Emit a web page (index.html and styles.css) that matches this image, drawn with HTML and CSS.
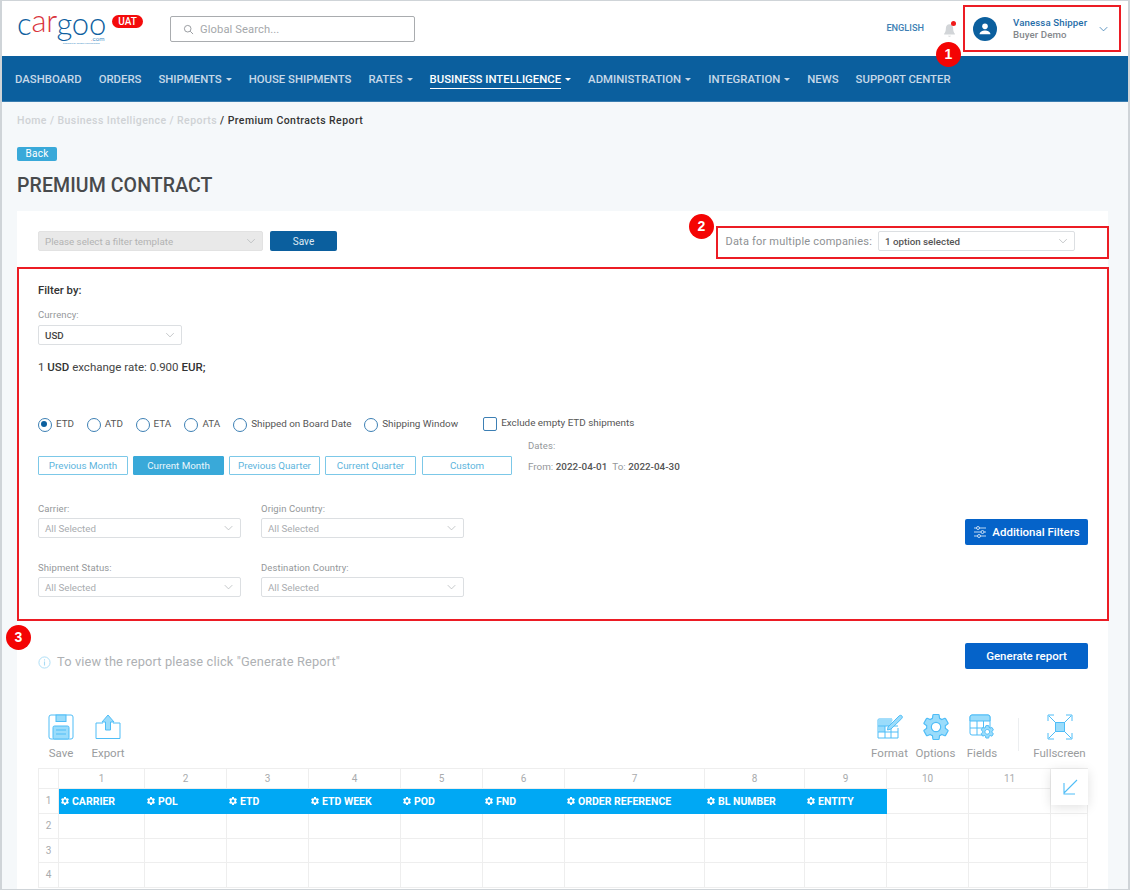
FILE: index.html
```html
<!DOCTYPE html>
<html lang="en">
<head>
<meta charset="utf-8">
<title>Premium Contract</title>
<link rel="stylesheet" href="styles.css">
</head>
<body>
<svg class="defs" width="0" height="0" aria-hidden="true">
  <symbol id="gear" viewBox="0 0 24 24"><path d="M19.14 12.94c.04-.3.06-.61.06-.94 0-.32-.02-.64-.07-.94l2.03-1.58c.18-.14.23-.41.12-.61l-1.92-3.32c-.12-.22-.37-.29-.59-.22l-2.39.96c-.5-.38-1.03-.7-1.62-.94l-.36-2.54c-.04-.24-.24-.41-.48-.41h-3.84c-.24 0-.43.17-.47.41l-.36 2.54c-.59.24-1.13.57-1.62.94l-2.39-.96c-.22-.08-.47 0-.59.22L2.74 8.87c-.12.21-.08.47.12.61l2.03 1.58c-.05.3-.09.63-.09.94s.02.64.07.94l-2.03 1.58c-.18.14-.23.41-.12.61l1.92 3.32c.12.22.37.29.59.22l2.39-.96c.5.38 1.03.7 1.62.94l.36 2.54c.05.24.24.41.48.41h3.84c.24 0 .44-.17.47-.41l.36-2.54c.59-.24 1.13-.56 1.62-.94l2.39.96c.22.08.47 0 .59-.22l1.92-3.32c.12-.22.07-.47-.12-.61l-2.01-1.58zM12 15.6c-1.98 0-3.6-1.62-3.6-3.6s1.62-3.6 3.6-3.6 3.6 1.62 3.6 3.6-1.62 3.6-3.6 3.6z"/></symbol>
  <symbol id="chev" viewBox="0 0 12 8"><path d="M1 1.5l5 5 5-5" fill="none" stroke="currentColor" stroke-width="1.1"/></symbol>
</svg>
<div class="frame">
  <header class="topbar">
    <div class="logo">
      <span class="logo-word"><span class="logo-blue">c</span><span class="logo-red logo-up">ar</span><span class="logo-blue">goo</span></span>
      <span class="logo-com"><span class="logo-red">.</span>com</span>
      <span class="logo-tag">powered by Cargoo Technologies</span>
    </div>
    <span class="uat">UAT</span>
    <div class="search">
      <svg class="search-icon" viewBox="0 0 14 14"><circle cx="6" cy="6" r="4.2" fill="none" stroke="#8b8f93" stroke-width="1.1"/><path d="M9.2 9.2l3.6 3.6" stroke="#8b8f93" stroke-width="1.1"/></svg>
      <span>Global Search...</span>
    </div>
    <div class="top-right">
      <span class="lang">ENGLISH</span>
      <span class="bell">
        <svg viewBox="0 0 14 16" width="13" height="15"><path d="M7 1.2c-2.6 0-3.9 2-3.9 4.3 0 3-.7 4.6-1.9 5.9v1h11.6v-1c-1.2-1.3-1.9-2.9-1.9-5.9C10.9 3.2 9.6 1.2 7 1.2z" fill="#d2d5d8"/><path d="M5.4 13.6a1.7 1.7 0 0 0 3.2 0z" fill="#d2d5d8"/></svg>
        <i class="bell-dot"></i>
      </span>
      <div class="user">
        <span class="avatar">
          <svg viewBox="0 0 24 24" width="16" height="16"><circle cx="12" cy="8" r="4.2" fill="#fff"/><path d="M3.8 20c0-4 4.4-5.8 8.2-5.8s8.2 1.800 8.200 5.800z" fill="#fff"/></svg>
        </span>
        <span class="user-text"><b>Vanessa Shipper</b><em>Buyer Demo</em></span>
        <svg class="user-chev"><use href="#chev"/></svg>
      </div>
    </div>
  </header>

  <nav class="nav">
    <a>Dashboard</a><a>Orders</a><a class="caret">Shipments</a><a>House Shipments</a><a class="caret">Rates</a><a class="caret active">Business Intelligence</a><a class="caret">Administration</a><a class="caret">Integration</a><a>News</a><a>Support Center</a>
  </nav>

  <main class="main">
    <div class="crumbs"><span class="crumb-dim">Home / Business Intelligence / Reports</span> / Premium Contracts Report</div>
    <button class="back">Back</button>
    <h1 class="title">PREMIUM CONTRACT</h1>

    <section class="card">
      <div class="tmpl-row">
        <div class="sel sel-disabled sel-tmpl"><span>Please select a filter template</span><svg class="sel-chev"><use href="#chev"/></svg></div>
        <button class="save">Save</button>
        <div class="multi">
          <span class="multi-label">Data for multiple companies:</span>
          <div class="sel sel-multi"><strong>1 option selected</strong><svg class="sel-chev"><use href="#chev"/></svg></div>
        </div>
      </div>

      <div class="filters">
        <div class="filter-by">Filter by:</div>
        <div class="lbl lbl-cur">Currency:</div>
        <div class="sel sel-cur"><span class="sel-dark">USD</span><svg class="sel-chev"><use href="#chev"/></svg></div>
        <div class="rate">1 <b>USD</b> exchange rate: 0.900 <b>EUR;</b></div>

        <div class="date-block">
          <div class="date-left">
            <div class="radios">
              <label class="radio on w-a">ETD</label>
              <label class="radio w-a">ATD</label>
              <label class="radio w-a">ETA</label>
              <label class="radio w-a">ATA</label>
              <label class="radio w-b">Shipped on Board Date</label>
              <label class="radio w-c">Shipping Window</label>
              <label class="check">Exclude empty ETD shipments</label>
            </div>
            <div class="ranges">
              <button class="range r1">Previous Month</button>
              <button class="range r2 on">Current Month</button>
              <button class="range r3">Previous Quarter</button>
              <button class="range r4">Current Quarter</button>
              <button class="range r5">Custom</button>
            </div>
          </div>
          <div class="dates">
            <div class="lbl">Dates:</div>
            <div class="dates-val"><span>From:</span> <b>2022-04-01</b> &nbsp;<span>To:</span> <b>2022-04-30</b></div>
          </div>
        </div>

        <div class="selects">
          <div class="sel-col">
            <div class="field"><div class="lbl">Carrier:</div><div class="sel sel-wide"><span>All Selected</span><svg class="sel-chev"><use href="#chev"/></svg></div></div>
            <div class="field"><div class="lbl">Shipment Status:</div><div class="sel sel-wide"><span>All Selected</span><svg class="sel-chev"><use href="#chev"/></svg></div></div>
          </div>
          <div class="sel-col">
            <div class="field"><div class="lbl">Origin Country:</div><div class="sel sel-wide"><span>All Selected</span><svg class="sel-chev"><use href="#chev"/></svg></div></div>
            <div class="field"><div class="lbl">Destination Country:</div><div class="sel sel-wide"><span>All Selected</span><svg class="sel-chev"><use href="#chev"/></svg></div></div>
          </div>
          <button class="primary add-filters">
            <svg viewBox="0 0 14 14" width="14" height="14"><g fill="none" stroke="#d6e6f7" stroke-width=".9"><path d="M1 3h12M1 7h12M1 11h12"/><circle cx="5" cy="3" r="1.500" fill="#0563c9"/><circle cx="9.500" cy="7" r="1.500" fill="#0563c9"/><circle cx="6" cy="11" r="1.500" fill="#0563c9"/></g></svg>
            Additional Filters
          </button>
        </div>
      </div>

      <div class="gen-row">
        <div class="hint">
          <svg viewBox="0 0 14 14" width="13" height="13"><circle cx="7" cy="7" r="6" fill="none" stroke="#a9dcf5" stroke-width="1"/><path d="M7 6v4.200M7 3.600v1.200" stroke="#a9dcf5" stroke-width="1.200"/></svg>
          To view the report please click "Generate Report"
        </div>
        <button class="primary generate">Generate report</button>
      </div>

      <div class="toolbar">
        <div class="tool tool-save">
          <svg viewBox="0 0 26 26" width="26" height="26"><path d="M2.500 1h20a2 2 0 0 1 2 2v20a2 2 0 0 1-2 2h-20a2 2 0 0 1-2-2V3a2 2 0 0 1 2-2z" transform="translate(.5)" fill="#fff" stroke="#4fbdf7"/><rect x="8" y="1" width="10" height="6.500" fill="#9adcfb" stroke="#4fbdf7"/><rect x="5" y="12" width="16" height="13" rx="1.500" fill="#9adcfb" stroke="#4fbdf7"/><path d="M8 16h10M8 20h10" stroke="#4fbdf7"/></svg>
          <span>Save</span>
        </div>
        <div class="tool tool-export">
          <svg viewBox="0 0 26 26" width="26" height="26"><path d="M8 9H1v15.500h24V9h-7" fill="none" stroke="#4fbdf7"/><path d="M13 1l6 7h-3.500v8h-5V8H7z" fill="#9adcfb" stroke="#4fbdf7"/></svg>
          <span>Export</span>
        </div>
        <div class="tools-right">
          <div class="tool tool-format">
            <svg viewBox="0 0 26 26" width="26" height="26"><path d="M15 5H2a1 1 0 0 0-1 1v18h20V14" fill="#fff" stroke="#4fbdf7"/><path d="M1 5.500h15L13 12H1z" fill="#9adcfb"/><rect x="1" y="12" width="7" height="6" fill="#9adcfb"/><path d="M1 12h20M1 18h20M8 12v12M14 12v12" stroke="#4fbdf7" fill="none"/><path d="M11 13L22 2c1-1 2.500-.8 3 0s.5 1.800-.3 2.600L14 15l-3.500 1z" fill="#9adcfb" stroke="#4fbdf7"/></svg>
            <span>Format</span>
          </div>
          <div class="tool tool-options">
            <svg class="gear-big" viewBox="2.500 2 19 20" width="26" height="26"><use href="#gear" width="24" height="24"/></svg>
            <span>Options</span>
          </div>
          <div class="tool tool-fields">
            <svg viewBox="0 0 26 26" width="26" height="26"><rect x="1" y="1" width="20" height="20" rx="2" fill="#fff" stroke="#4fbdf7"/><path d="M1 3a2 2 0 0 1 2-2h16a2 2 0 0 1 2 2v4H1z" fill="#9adcfb" stroke="#4fbdf7"/><path d="M1 14h20M8 7v14M14.500 7v14" stroke="#4fbdf7" fill="none"/><g transform="translate(10.500 10) scale(.65)"><use href="#gear" width="24" height="24" class="gear-small"/></g></svg>
            <span>Fields</span>
          </div>
          <i class="tool-sep"></i>
          <div class="tool tool-full">
            <svg viewBox="0 0 26 26" width="26" height="26"><rect x="8.500" y="8.500" width="9" height="9" fill="#9adcfb" stroke="#4fbdf7"/><g fill="none" stroke="#4fbdf7"><path d="M1 7V1h6M25 7V1h-6M1 19v6h6M25 19v6h-6M2 2l6 6M24 2l-6 6M2 24l6-6M24 24l-6-6"/></g></svg>
            <span>Fullscreen</span>
          </div>
        </div>
      </div>

      <div class="sheet">
        <div class="c corner"></div><div class="c hd">1</div><div class="c hd">2</div><div class="c hd">3</div><div class="c hd">4</div><div class="c hd">5</div><div class="c hd">6</div><div class="c hd">7</div><div class="c hd">8</div><div class="c hd">9</div><div class="c hd">10</div><div class="c hd">11</div><div class="c hd"></div>
        <div class="c rn">1</div>
        <div class="c f"><svg class="fg"><use href="#gear"/></svg>CARRIER</div><div class="c f"><svg class="fg"><use href="#gear"/></svg>POL</div><div class="c f"><svg class="fg"><use href="#gear"/></svg>ETD</div><div class="c f"><svg class="fg"><use href="#gear"/></svg>ETD WEEK</div><div class="c f"><svg class="fg"><use href="#gear"/></svg>POD</div><div class="c f"><svg class="fg"><use href="#gear"/></svg>FND</div><div class="c f"><svg class="fg"><use href="#gear"/></svg>ORDER REFERENCE</div><div class="c f"><svg class="fg"><use href="#gear"/></svg>BL NUMBER</div><div class="c f"><svg class="fg"><use href="#gear"/></svg>ENTITY</div>
        <div class="c"></div><div class="c"></div><div class="c"></div>
        <div class="c rn">2</div><div class="c"></div><div class="c"></div><div class="c"></div><div class="c"></div><div class="c"></div><div class="c"></div><div class="c"></div><div class="c"></div><div class="c"></div><div class="c"></div><div class="c"></div><div class="c"></div>
        <div class="c rn">3</div><div class="c"></div><div class="c"></div><div class="c"></div><div class="c"></div><div class="c"></div><div class="c"></div><div class="c"></div><div class="c"></div><div class="c"></div><div class="c"></div><div class="c"></div><div class="c"></div>
        <div class="c rn">4</div><div class="c"></div><div class="c"></div><div class="c"></div><div class="c"></div><div class="c"></div><div class="c"></div><div class="c"></div><div class="c"></div><div class="c"></div><div class="c"></div><div class="c"></div><div class="c"></div>
        <div class="float-btn"><svg viewBox="0 0 16 16" width="16" height="16"><path d="M15 1L2 14M2 4v11h11" fill="none" stroke="#4fbdf7" stroke-width="1.100"/></svg></div>
      </div>
    </section>
  </main>

  <div class="mark mark-1"></div>
  <div class="mark mark-2"></div>
  <div class="mark mark-3"></div>
  <span class="num num-1">1</span>
  <span class="num num-2">2</span>
  <span class="num num-3">3</span>
</div>
</body>
</html>
```
FILE: styles.css
```css
* { box-sizing: border-box; }
html, body { margin: 0; padding: 0; }
body { font-family: Roboto, "Liberation Sans", sans-serif; background: #fff; color: #333; }
.defs { position: absolute; }
button { font-family: inherit; cursor: pointer; }

.frame { position: relative; width: 1130px; height: 890px; overflow: hidden; border: 1px solid #cfd4d8; border-left-width: 2px; border-right-width: 2px; background: #f5f8fa; }

/* top bar */
.topbar { display: flex; align-items: center; height: 55px; background: #fff; padding-left: 16px; }
.logo { position: relative; width: 94px; height: 55px; flex: none; }
.logo-word { position: absolute; left: -1px; top: 10px; font-family: Lato, sans-serif; font-weight: 300; font-size: 31px; line-height: 24px; letter-spacing: -.2px; white-space: nowrap; }
.logo-blue { color: #0f5f9f; }
.logo-red { color: #d9343c; }
.logo-up { position: relative; top: -3px; }
.logo-com { position: absolute; left: 73px; top: 34px; font-size: 6px; line-height: 7px; color: #3f8fc7; }
.logo-tag { position: absolute; left: 45px; top: 41px; font-size: 2.500px; line-height: 3px; color: #3f8fc7; white-space: nowrap; }
.uat { align-self: flex-start; margin-top: 14px; flex: none; width: 31px; height: 13px; border-radius: 7px; background: #f40b0b; color: #fff; font-size: 10px; font-weight: 500; line-height: 13px; text-align: center; }
.search { display: flex; align-items: center; margin-left: 27px; margin-top: 1px; width: 245px; height: 26px; border: 1px solid #a9acaf; border-radius: 2px; padding-left: 12px; font-size: 11.200px; color: #a5a8ab; letter-spacing: .1px; }
.search-icon { width: 11px; height: 11px; margin-right: 6px; }
.top-right { display: flex; align-items: center; margin-left: auto; }
.lang { font-size: 9.200px; font-weight: 500; color: #3d7fb4; margin-top: -2px; }
.bell { position: relative; display: block; width: 13px; height: 15px; margin-left: 19px; margin-top: 3px; }
.bell svg { display: block; }
.bell-dot { position: absolute; left: 8px; top: -2px; width: 5px; height: 5px; border-radius: 50%; background: #f01a1a; }
.user { display: flex; align-items: center; width: 157px; height: 46px; margin-left: 7px; padding-left: 10px; margin-right: 8px; }
.avatar { display: flex; align-items: center; justify-content: center; width: 24px; height: 24px; border-radius: 50%; background: #0b5f9e; flex: none; }
.user-text { display: flex; flex-direction: column; margin-left: 16px; font-size: 9.700px; line-height: 12px; white-space: nowrap; letter-spacing: .1px; }
.user-text b { font-weight: 500; color: #1f6da8; }
.user-text em { font-style: normal; font-weight: 500; color: #85888b; }
.user-chev { width: 9px; height: 6px; margin-left: 12px; color: #3d7fb4; flex: none; }

/* navigation */
.nav { display: flex; align-items: center; gap: 17px; height: 46px; background: #0b5f9e; padding-left: 13px; border-bottom: 1px solid #3a7db0; }
.nav a { position: relative; font-size: 11.350px; font-weight: 500; line-height: 16px; text-transform: uppercase; color: #c6d8e8; white-space: nowrap; }
.nav a.caret::after { content: ""; display: inline-block; margin-left: 4px; vertical-align: 2px; border: 3.500px solid transparent; border-top: 3.500px solid currentColor; border-bottom: 0; }
.nav a.active { color: #fff; }
.nav a.active::before { content: ""; position: absolute; left: 0; right: 10px; bottom: -2px; height: 1px; background: #fff; }

/* main */
.main { padding: 12px 20px 0 15px; }
.crumbs { height: 14px; font-size: 10.500px; line-height: 14px; font-weight: 500; color: #333; letter-spacing: .43px; }
.crumb-dim { color: #cfd2d5; }
.back { display: block; margin-top: 19px; width: 40px; height: 14px; padding: 0; border: 0; border-radius: 2px; background: #39a9d9; color: #fff; font-size: 10px; line-height: 14px; letter-spacing: .3px; }
.title { margin: 14px 0 0; height: 22px; font-size: 19.500px; line-height: 22px; font-weight: 500; color: #484a4c; letter-spacing: .1px; }
.card { width: 1091px; height: 700px; margin-top: 14px; background: #fff; padding: 20px 20px 0 21px; }

.sel { display: flex; align-items: center; justify-content: space-between; height: 20px; border: 1px solid #dcdfe2; border-radius: 2px; background: #fff; padding: 0 6px; font-size: 9.750px; color: #b0b3b6; }
.sel-chev { width: 10px; height: 6px; color: #b9bcbf; flex: none; }
.sel-dark { color: #444; font-weight: 500; }

.tmpl-row { display: flex; align-items: center; height: 20px; }
.sel-disabled { background: #e9e9e9; border-color: #e2e2e2; color: #b3b3b3; }
.sel-tmpl { width: 225px; flex: none; }
.save { width: 67px; height: 20px; margin-left: 7px; padding: 0; border: 0; border-radius: 2px; background: #0b5f9e; color: #dfeaf3; font-size: 10px; }
.multi { display: flex; align-items: center; margin-left: auto; margin-right: 13px; }
.multi-label { font-size: 11px; color: #8e9194; letter-spacing: .2px; margin-right: 6px; }
.sel-multi { width: 197px; color: #555; }
.sel-multi strong { font-weight: 500; }

.filters { height: 353px; margin-top: 16px; position: relative; }
.filter-by { padding-top: 17px; font-size: 11.300px; line-height: 13px; font-weight: 500; color: #333; }
.lbl { font-size: 9.500px; line-height: 12px; color: #94979a; letter-spacing: .1px; }
.lbl-cur { margin-top: 12px; }
.sel-cur { width: 144px; margin-top: 4px; }
.rate { margin-top: 16px; font-size: 11.500px; line-height: 13px; color: #444; }
.rate b { font-weight: 500; color: #333; }

.date-block { display: flex; margin-top: 37px; }
.date-left { width: 491px; flex: none; }
.radios { display: flex; align-items: center; height: 14px; margin-top: 6px; }
.radio { position: relative; display: block; flex: none; padding-left: 18px; font-size: 9.900px; line-height: 14px; color: #555; white-space: nowrap; }
.radio::before { content: ""; position: absolute; left: 0; top: 1px; width: 12px; height: 12px; border: 1px solid #3d7fb4; border-radius: 50%; background: #fff; }
.radio.on::after { content: ""; position: absolute; left: 3px; top: 4px; width: 6px; height: 6px; border-radius: 50%; background: #0b5f9e; }
.w-a { width: 48.800px; }
.w-b { width: 131px; }
.w-c { width: 119px; }
.check { position: relative; display: block; flex: none; margin-top: -2px; padding-left: 18px; font-size: 9.900px; line-height: 14px; color: #555; white-space: nowrap; }
.check::before { content: ""; position: absolute; left: 0; top: 1px; width: 12px; height: 12px; border: 1px solid #3d7fb4; border-radius: 2px; background: #fff; }
.ranges { display: flex; margin-top: 25px; }
.range { height: 19px; padding: 0; margin-right: 5px; border: 1px solid #7cc8e8; border-radius: 1px; background: #fff; color: #5db5dd; font-size: 9.800px; }
.range.on { background: #39a9d9; border-color: #39a9d9; color: #e9f6fb; }
.r1 { width: 90px; }
.r2 { width: 91px; }
.r3 { width: 91px; }
.r4 { width: 91px; margin-right: 6px; }
.r5 { width: 90px; margin-right: 0; }
.dates { margin-left: -1px; padding-top: 29px; }
.dates-val { margin-top: 9px; font-size: 9.900px; line-height: 12px; color: #94979a; white-space: nowrap; }
.dates-val b { font-weight: 500; color: #555; }

.selects { position: relative; display: flex; gap: 20px; margin-top: 28px; }
.sel-col { display: flex; flex-direction: column; gap: 24px; }
.sel-wide { width: 203px; margin-top: 3px; color: #a9acaf; }
.sel-wide .sel-chev { width: 11px; }
.primary { border: 0; border-radius: 2px; background: #0563c9; color: #fff; font-weight: 500; }
.add-filters { display: flex; align-items: center; justify-content: center; gap: 5px; position: absolute; right: 0; top: 16px; width: 123px; height: 26px; padding: 0; font-size: 11.500px; }

.gen-row { display: flex; align-items: flex-start; justify-content: space-between; margin-top: 23px; height: 26px; width: 1050px; }
.hint { display: flex; align-items: center; gap: 6px; margin-top: 12px; font-size: 12.800px; line-height: 14px; color: #aeb1b4; letter-spacing: .15px; }
.generate { width: 123px; height: 26px; padding: 0; font-size: 11.500px; }

.toolbar { display: flex; align-items: flex-start; width: 1050px; margin-top: 45px; height: 54px; }
.tool { display: flex; flex-direction: column; align-items: center; font-size: 11.500px; line-height: 13px; color: #9a9c9e; }
.tool svg { height: 26px; margin-bottom: 7px; overflow: visible; }
.tool-save { margin-left: 10px; width: 26px; }
.tool-export { margin-left: 17px; width: 34px; }
.tools-right { display: flex; align-items: flex-start; margin-left: auto; }
.tool-format { width: 37px; }
.tool-options { width: 39px; margin-left: 8px; }
.gear-big { fill: #9adcfb; stroke: #4fbdf7; stroke-width: .9; }
.gear-small { fill: #9adcfb; stroke: #4fbdf7; stroke-width: 1.500; }
.tool-fields { width: 32px; margin-left: 11px; }
.tool-sep { display: block; width: 1px; height: 33px; margin: 4px 14px 0 20px; background: #eceef0; }
.tool-full { width: 53px; margin-right: 2px; }

.sheet { position: relative; display: grid; width: 1050px; margin-top: 0; grid-template-columns: 20px 86px 82px 82px 92px 82px 82px 140px 100px 82px 82px 82px 37px; grid-template-rows: 20px 25px 25px 24px 25px; border-top: 1px solid #eee; border-left: 1px solid #eee; }
.c { border-right: 1px solid #eee; border-bottom: 1px solid #eee; font-size: 10px; line-height: 19px; color: #a9abad; text-align: center; min-width: 0; }
.rn { line-height: 24px; }
.f { display: flex; align-items: center; gap: 2px; padding-left: 1px; background: #00a8f4; border-color: #00a8f4; color: #fff; font-size: 10.500px; font-weight: 700; text-align: left; white-space: nowrap; }
.fg { width: 10px; height: 10px; fill: #fff; flex: none; }
.float-btn { position: absolute; right: 0; top: 0; display: flex; align-items: center; justify-content: center; width: 37px; height: 36px; background: #fff; box-shadow: 0 2px 12px rgba(0,0,0,.12); }

/* annotation overlays */
.mark { position: absolute; border: 2px solid #ec1c24; pointer-events: none; }
.mark-1 { left: 961px; top: 4px; width: 158px; height: 47px; }
.mark-2 { left: 714px; top: 225px; width: 393px; height: 33px; }
.mark-3 { left: 15px; top: 266px; width: 1092px; height: 354px; }
.num { position: absolute; width: 25px; height: 25px; border-radius: 50%; background: #f40404; color: #fff; font-size: 14px; font-weight: 700; line-height: 25px; text-align: center; font-family: "Liberation Sans", sans-serif; }
.num-1 { left: 934px; top: 41px; }
.num-2 { left: 687px; top: 213px; }
.num-3 { left: 4px; top: 624px; }
```
